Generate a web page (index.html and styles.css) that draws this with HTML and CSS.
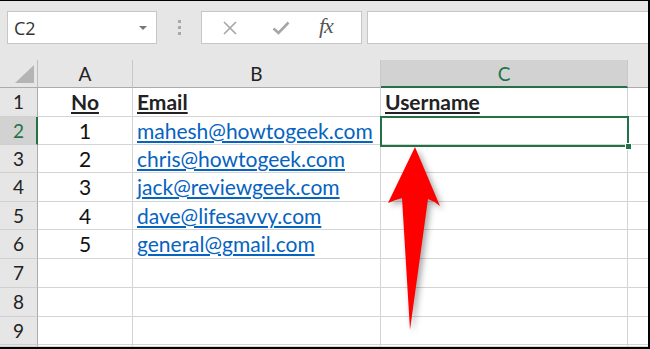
FILE: index.html
```html
<!DOCTYPE html>
<html lang="en">
<head>
  <meta charset="UTF-8">
  <title>Sheet - select C2</title>
  <link rel="stylesheet" href="styles.css">
</head>
<body>
  <div class="window">
    <div class="formula-bar">
      <div class="name-box">
        <span>C2</span>
        <span class="caret"></span>
      </div>
      <div class="grip"><i></i><i></i><i></i></div>
      <div class="fx-buttons">
        <svg class="icon" width="16" height="16" viewBox="0 0 16 16">
          <path d="M2 2 L14 14 M14 2 L2 14" stroke="#a6a6a6" stroke-width="1.6" fill="none"/>
        </svg>
        <svg class="icon" width="18" height="16" viewBox="0 0 18 16">
          <path d="M1.5 8.5 L6.5 13 L16.5 2.5" stroke="#a6a6a6" stroke-width="2.6" fill="none"/>
        </svg>
        <span class="fx">fx</span>
      </div>
      <div class="formula-input"></div>
    </div>

    <div class="sheet">
      <div class="grid">
        <!-- header row -->
        <div class="corner"><span class="tri"></span></div>
        <div class="col-head">A</div>
        <div class="col-head">B</div>
        <div class="col-head active">C</div>
        <div class="col-head last"></div>

        <div class="row-head">1</div>
        <div class="cell center"><b class="title">No</b></div>
        <div class="cell"><b class="title">Email</b></div>
        <div class="cell"><b class="title">Username</b></div>
        <div class="cell last"></div>

        <div class="row-head active">2</div>
        <div class="cell center">1</div>
        <div class="cell"><a class="link">mahesh@howtogeek.com</a></div>
        <div class="cell"></div>
        <div class="cell last"></div>

        <div class="row-head">3</div>
        <div class="cell center">2</div>
        <div class="cell"><a class="link">chris@howtogeek.com</a></div>
        <div class="cell"></div>
        <div class="cell last"></div>

        <div class="row-head">4</div>
        <div class="cell center">3</div>
        <div class="cell"><a class="link">jack@reviewgeek.com</a></div>
        <div class="cell"></div>
        <div class="cell last"></div>

        <div class="row-head">5</div>
        <div class="cell center">4</div>
        <div class="cell"><a class="link">dave@lifesavvy.com</a></div>
        <div class="cell"></div>
        <div class="cell last"></div>

        <div class="row-head">6</div>
        <div class="cell center">5</div>
        <div class="cell"><a class="link">general@gmail.com</a></div>
        <div class="cell"></div>
        <div class="cell last"></div>

        <div class="row-head">7</div>
        <div class="cell"></div>
        <div class="cell"></div>
        <div class="cell"></div>
        <div class="cell last"></div>

        <div class="row-head">8</div>
        <div class="cell"></div>
        <div class="cell"></div>
        <div class="cell"></div>
        <div class="cell last"></div>

        <div class="row-head">9</div>
        <div class="cell"></div>
        <div class="cell"></div>
        <div class="cell"></div>
        <div class="cell last"></div>

        <div class="row-head"></div>
        <div class="cell"></div>
        <div class="cell"></div>
        <div class="cell"></div>
        <div class="cell last"></div>
      </div>

      <!-- selected cell C2 -->
      <div class="selection"><span class="handle"></span></div>

      <!-- callout arrow -->
      <svg class="arrow" width="80" height="200" viewBox="0 0 80 200">
        <path d="M35 0 L60 59 Q54 54 48 52 L30 183 L22 51 Q15 53 8 56 Z" fill="#ff0000"/>
      </svg>
    </div>
  </div>
</body>
</html>
```

FILE: styles.css
```css
* {
  box-sizing: border-box;
}

body {
  margin: 0;
  background: #000;
}

.window {
  width: 650px;
  height: 349px;
  overflow: hidden;
  background: #e6e6e6;
  border-top: 1px solid #000;
  border-right: 2px solid #000;
  border-bottom: 2px solid #000;
  font-family: Lato, "Open Sans", sans-serif;
}

/* formula bar */
.formula-bar {
  display: flex;
  height: 59px;
  padding: 10px 0 0 7px;
}

.name-box {
  width: 150px;
  height: 33px;
  background: #fff;
  border: 1px solid #c6c6c6;
  display: flex;
  align-items: center;
  justify-content: space-between;
  padding: 0 9px 0 6px;
  font-family: "Open Sans", sans-serif;
  font-size: 18px;
  color: #333;
}

.caret {
  width: 0;
  height: 0;
  border-left: 4px solid transparent;
  border-right: 4px solid transparent;
  border-top: 4px solid #777;
  margin-top: 1px;
}

.grip {
  width: 44px;
  height: 33px;
  display: flex;
  flex-direction: column;
  align-items: center;
  justify-content: center;
  gap: 3px;
}

.grip i {
  width: 3px;
  height: 3px;
  background: #a8a8a8;
}

.fx-buttons {
  width: 161px;
  height: 33px;
  background: #fff;
  border: 1px solid #c6c6c6;
  display: flex;
  align-items: center;
  padding-left: 20px;
  gap: 34px;
}

.fx {
  font-family: "Liberation Serif", serif;
  font-style: italic;
  font-size: 22px;
  color: #555;
  letter-spacing: -1px;
  margin-left: -5px;
  margin-top: -3px;
}

.formula-input {
  flex: 1;
  height: 33px;
  margin-left: 5px;
  background: #fff;
  border: 1px solid #c6c6c6;
  border-right: none;
}

/* sheet */
.sheet {
  position: relative;
  height: 287px;
  background: #fff;
}

.grid {
  display: grid;
  grid-template-columns: 38px 95px 248px 247px 1fr;
  grid-template-rows: 28px 29px 28px 28px 29px 28px 29px 29px 29px 28px 1fr;
  height: 100%;
}

.corner,
.col-head,
.row-head {
  background: #e6e6e6;
  color: #222;
}

.corner {
  position: relative;
  border-right: 1px solid #bdbdbd;
  border-bottom: 1px solid #ababab;
}

.tri {
  position: absolute;
  right: 3px;
  bottom: 4px;
  width: 0;
  height: 0;
  border-left: 19px solid transparent;
  border-bottom: 18px solid #b4b4b4;
}

.col-head {
  border-right: 1px solid #c8c8c8;
  border-bottom: 1px solid #ababab;
  font-size: 19px;
  text-align: center;
  line-height: 28px;
}

.col-head.active {
  background: #d2d2d2;
  color: #217346;
  border-bottom: 2px solid #217346;
}

.col-head.last {
  border-right: none;
}

.row-head {
  border-right: 1px solid #ababab;
  border-bottom: 1px solid #d0d0d0;
  font-size: 19px;
  padding-left: 13px;
  line-height: 28px;
}

.row-head.active {
  background: #d2d2d2;
  color: #217346;
  border-right: 2px solid #217346;
}

.cell {
  border-right: 1px solid #d4d4d4;
  border-bottom: 1px solid #d4d4d4;
  font-size: 21px;
  color: #111;
  padding-left: 4px;
  line-height: 28px;
  white-space: nowrap;
}

.cell.center {
  text-align: center;
  padding-left: 0;
}

.cell.last {
  border-right: none;
}

.title {
  text-decoration: underline;
  color: #222;
}

.link {
  color: #0563c1;
  text-decoration: underline;
}

.selection {
  position: absolute;
  left: 380px;
  top: 56px;
  width: 249px;
  height: 31px;
  border: 2px solid #217346;
}

.handle {
  position: absolute;
  right: -5px;
  bottom: -5px;
  width: 7px;
  height: 7px;
  background: #217346;
  border: 1px solid #fff;
}

.arrow {
  position: absolute;
  left: 380px;
  top: 87px;
  filter: drop-shadow(3px 3px 3px rgba(0, 0, 0, 0.35));
}
```
